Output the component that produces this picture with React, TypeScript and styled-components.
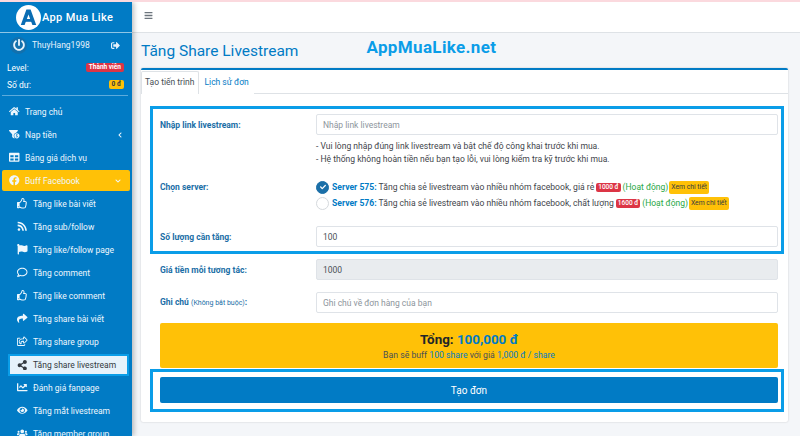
import React from "react";
import styled, { createGlobalStyle } from "styled-components";
import {
  FaHome,
  FaFunnelDollar,
  FaTable,
  FaFacebook,
  FaRegThumbsUp,
  FaRss,
  FaFlag,
  FaRegComment,
  FaShare,
  FaRegShareSquare,
  FaShareAlt,
  FaChartLine,
  FaEye,
  FaUsers,
  FaSignOutAlt,
  FaPowerOff,
  FaChevronLeft,
  FaChevronDown,
  FaBars,
  FaCheck,
} from "react-icons/fa";

const GlobalStyles = createGlobalStyle`
  html, body {
    margin: 0;
    padding: 0;
    height: 436px;
    overflow: hidden;
    background: #f4f6f9;
  }
  * { box-sizing: border-box; }
  body {
    font-family: Roboto, "Liberation Sans", sans-serif;
    font-size: 9px;
    color: #343a40;
  }
`;

const Page = styled.div`
  width: 800px;
  height: 436px;
  display: flex;
  overflow: hidden;
  border-top: 2px solid #fbd9de;
`;

const Sidebar = styled.aside`
  width: 132px;
  flex-shrink: 0;
  height: 434px;
  background: #017bc5;
  color: #fff;
  overflow: hidden;
  box-shadow: 2px 0 5px rgba(0, 0, 0, 0.25);
  z-index: 1;
`;

const Brand = styled.div`
  height: 31px;
  display: flex;
  align-items: center;
  padding-left: 16px;
  gap: 1px;
  border-bottom: 1px solid #8fc6e6;
  font-size: 11px;
  font-weight: 500;
  letter-spacing: 0.35px;
`;

const UserRow = styled.div`
  display: flex;
  align-items: center;
  padding: 0 12px 2px 10px;
  height: 26px;
  font-size: 8.5px;
  color: #e5f2fb;
  svg { flex-shrink: 0; }
`;

const UserName = styled.span`
  margin-left: 5px;
  flex: 1;
`;

const PowerBadge = styled.span`
  width: 17px;
  height: 17px;
  border-radius: 50%;
  background: #1270ad;
  display: flex;
  align-items: center;
  justify-content: center;
`;

const InfoRow = styled.div`
  display: flex;
  align-items: center;
  justify-content: space-between;
  height: 17px;
  padding: 0 8px 0 7px;
  font-size: 8.5px;
`;

const Pill = styled.span<{ $tone: "red" | "yellow" }>`
  background: ${(p) => (p.$tone === "red" ? "#dc3545" : "#ffc107")};
  color: ${(p) => (p.$tone === "red" ? "#fff" : "#343a40")};
  font-size: 6.5px;
  font-weight: 700;
  border-radius: 2px;
  padding: 1px 3px;
  line-height: 7px;
`;

const Divider = styled.div`
  height: 1px;
  margin: 2px 4px 4px 2px;
  background: #5cabdc;
`;

const NavList = styled.nav`
  display: flex;
  flex-direction: column;
`;

const NavItem = styled.div<{ $sub?: boolean; $open?: boolean; $current?: boolean }>`
  height: ${(p) => (p.$current ? "22px" : p.$open ? "21px" : "23px")};
  margin: ${(p) =>
    p.$open ? "1px 2px 1px" : p.$current ? "1px 3px 0 8px" : "0"};
  padding-left: ${(p) => (p.$current ? "7px" : p.$sub ? "17px" : p.$open ? "7px" : "9px")};
  padding-right: 9px;
  display: flex;
  align-items: center;
  font-size: 8.5px;
  color: ${(p) => (p.$current ? "#343a40" : "#eef7fd")};
  background: ${(p) => (p.$open ? "#ffc107" : p.$current ? "#e6f2fb" : "transparent")};
  border-radius: ${(p) => (p.$open ? "2px" : "0")};
  border: ${(p) => (p.$current ? "2px solid #0a9de8" : "none")};
`;

const NavIcon = styled.span`
  width: 16px;
  display: flex;
  align-items: center;
  flex-shrink: 0;
  font-size: 10.5px;
`;

const NavText = styled.span`
  flex: 1;
  white-space: nowrap;
`;

const Main = styled.div`
  flex: 1;
  min-width: 0;
  display: flex;
  flex-direction: column;
`;

const TopBar = styled.header`
  height: 31px;
  flex-shrink: 0;
  background: #fff;
  border-bottom: 1px solid #dee2e6;
  display: flex;
  align-items: center;
  padding: 0 0 3px 12px;
  color: #6c757d;
  font-size: 9px;
`;

const Content = styled.main`
  flex: 1;
  padding: 0 12px 0 9px;
`;

const TitleRow = styled.div`
  height: 35px;
  display: flex;
  align-items: center;
  gap: 68px;
`;

const Title = styled.h1`
  margin: 0;
  font-size: 15.5px;
  font-weight: 400;
  color: #017bc5;
  white-space: nowrap;
`;

const Watermark = styled.span`
  font-size: 17px;
  font-weight: 700;
  color: #0a9de8;
  letter-spacing: 0.35px;
  margin-top: -7px;
`;

const Card = styled.section`
  height: 354px;
  background: #fff;
  border-top: 2px solid #017bc5;
  border-radius: 2px;
  box-shadow: 0 0 2px rgba(0, 0, 0, 0.2);
`;

const Tabs = styled.div`
  display: flex;
  height: 24px;
  padding-top: 1px;
  border-bottom: 1px solid #dee2e6;
  font-size: 8.5px;
`;

const Tab = styled.div<{ $active?: boolean }>`
  height: 23px;
  padding: 0 4px 2px ${(p) => (p.$active ? "3px" : "4px")};
  display: flex;
  align-items: center;
  color: ${(p) => (p.$active ? "#495057" : "#017bc5")};
  background: #fff;
  border: 1px solid ${(p) => (p.$active ? "#dee2e6" : "transparent")};
  border-bottom: 0;
  border-radius: 2px 2px 0 0;
`;

const FormBody = styled.div`
  padding: 12px 4px 0 9px;
`;

const Highlight = styled.div`
  border: 3px solid #0a9de8;
`;

const FieldBlock = styled(Highlight)`
  padding: 5px 3px 0 7px;
  height: 148px;
`;

const Row = styled.div`
  display: grid;
  grid-template-columns: 156px 1fr;
  align-items: center;
  height: 21px;
`;

const QuantityRow = styled(Row)`
  margin-top: 16px;
`;

const PlainFields = styled.div`
  display: flex;
  flex-direction: column;
  gap: 12px;
  padding: 5px 6px 10px 10px;
`;

const Label = styled.label`
  font-size: 8.5px;
  line-height: 14px;
  font-weight: 700;
  color: #1a6ea6;
`;

const Hint = styled.small`
  font-size: 7px;
  font-weight: 400;
`;

const Input = styled.div<{ $disabled?: boolean; $value?: boolean }>`
  height: 21px;
  border: 1px solid #dfe3e8;
  border-radius: 2px;
  padding: 0 6px;
  display: flex;
  align-items: center;
  font-size: 8.5px;
  color: ${(p) => (p.$value ? "#495057" : "#8d959c")};
  background: ${(p) => (p.$disabled ? "#e9ecef" : "#fff")};
`;

const Notes = styled.div`
  margin: 5px 0 0 156px;
  font-size: 8.55px;
  line-height: 13px;
  color: #3f454b;
`;

const ServerRow = styled.div`
  display: grid;
  grid-template-columns: 156px 1fr;
  align-items: start;
  margin-top: 14px;
`;

const ServerList = styled.div`
  display: flex;
  flex-direction: column;
  gap: 2px;
`;

const ServerOption = styled.div`
  display: flex;
  align-items: center;
  height: 14px;
  font-size: 8.6px;
  white-space: nowrap;
  color: #3f454b;
`;

const Radio = styled.span<{ $checked?: boolean }>`
  width: 13px;
  height: 13px;
  border-radius: 50%;
  margin-right: 3px;
  flex-shrink: 0;
  display: flex;
  align-items: center;
  justify-content: center;
  color: #fff;
  font-size: 6px;
  background: ${(p) => (p.$checked ? "#1b6fa8" : "#fff")};
  border: 1px solid ${(p) => (p.$checked ? "#1b6fa8" : "#d5d9dd")};
`;

const ServerName = styled.b`
  color: #017bc5;
  margin-right: 2px;
`;

const Price = styled.span`
  background: #dc3545;
  color: #fff;
  font-size: 6.5px;
  font-weight: 500;
  padding: 1px 2px;
  line-height: 7px;
  border-radius: 2px;
  margin: 0 1px 0 2px;
`;

const Active = styled.span`
  color: #28a745;
  margin: 0 1px;
  font-size: 8.5px;
`;

const Detail = styled.span`
  background: #ffc107;
  color: #343a40;
  font-size: 6.8px;
  padding: 3px 2px;
  line-height: 7px;
  border-radius: 2px;
`;

const Total = styled.div`
  height: 45px;
  margin: 0 6px 0 10px;
  background: #ffc107;
  border-radius: 2px;
  display: flex;
  flex-direction: column;
  align-items: center;
  justify-content: center;
  gap: 3px;
  padding-top: 1px;
`;

const TotalAmount = styled.div`
  font-size: 13.4px;
  font-weight: 700;
  color: #212529;
`;

const Accent = styled.span`
  color: #017bc5;
`;

const TotalNote = styled.div`
  font-size: 8.7px;
  color: #495057;
`;

const SubmitBox = styled(Highlight)`
  height: 43px;
  margin-top: 1px;
  padding: 5px 3px 0 7px;
`;

const Submit = styled.button`
  width: 100%;
  height: 26px;
  background: #017bc5;
  color: #fff;
  border: 0;
  border-radius: 2px;
  font: 400 10px Roboto, "Liberation Sans", sans-serif;
`;

const Logo = () => (
  <svg width="25" height="25" viewBox="0 0 25 25">
    <circle cx="12.5" cy="12.5" r="12.5" fill="#fff" />
    <path d="M10.4 4.5 H14.6 L20.2 20 H16.4 L12.5 9.6 L8.6 20 H4.8 Z" fill="#0a6db3" />
    <rect x="9" y="14" width="7" height="2.8" fill="#0a6db3" />
  </svg>
);

const menu = [
  { icon: <FaHome />, text: "Trang chủ" },
  { icon: <FaFunnelDollar />, text: "Nạp tiền", arrow: <FaChevronLeft size={6} /> },
  { icon: <FaTable />, text: "Bảng giá dịch vụ" },
  { icon: <FaFacebook />, text: "Buff Facebook", arrow: <FaChevronDown size={6} />, open: true },
  { icon: <FaRegThumbsUp />, text: "Tăng like bài viết", sub: true },
  { icon: <FaRss />, text: "Tăng sub/follow", sub: true },
  { icon: <FaFlag />, text: "Tăng like/follow page", sub: true },
  { icon: <FaRegComment />, text: "Tăng comment", sub: true },
  { icon: <FaRegThumbsUp />, text: "Tăng like comment", sub: true },
  { icon: <FaShare />, text: "Tăng share bài viết", sub: true },
  { icon: <FaRegShareSquare />, text: "Tăng share group", sub: true },
  { icon: <FaShareAlt />, text: "Tăng share livestream", sub: true, current: true },
  { icon: <FaChartLine />, text: "Đánh giá fanpage", sub: true },
  { icon: <FaEye />, text: "Tăng mắt livestream", sub: true },
  { icon: <FaUsers />, text: "Tăng member group", sub: true },
];

const servers = [
  { id: "Server 575:", desc: "Tăng chia sẻ livestream vào nhiều nhóm facebook, giá rẻ", price: "1000 đ", checked: true },
  { id: "Server 576:", desc: "Tăng chia sẻ livestream vào nhiều nhóm facebook, chất lượng", price: "1600 đ" },
];

const App = () => {
  return (
    <Page>
      <GlobalStyles />
      <Sidebar>
        <Brand>
          <Logo />
          App Mua Like
        </Brand>
        <UserRow>
          <PowerBadge>
            <FaPowerOff size={12} />
          </PowerBadge>
          <UserName>ThuyHang1998</UserName>
          <FaSignOutAlt size={9} />
        </UserRow>
        <InfoRow>
          Level:
          <Pill $tone="red">Thành viên</Pill>
        </InfoRow>
        <InfoRow>
          Số dư:
          <Pill $tone="yellow">0 đ</Pill>
        </InfoRow>
        <Divider />
        <NavList>
          {menu.map((item) => (
            <NavItem key={item.text} $sub={item.sub} $open={item.open} $current={item.current}>
              <NavIcon>{item.icon}</NavIcon>
              <NavText>{item.text}</NavText>
              {item.arrow}
            </NavItem>
          ))}
        </NavList>
      </Sidebar>
      <Main>
        <TopBar>
          <FaBars />
        </TopBar>
        <Content>
          <TitleRow>
            <Title>Tăng Share Livestream</Title>
            <Watermark>AppMuaLike.net</Watermark>
          </TitleRow>
          <Card>
            <Tabs>
              <Tab $active>Tạo tiến trình</Tab>
              <Tab>Lịch sử đơn</Tab>
            </Tabs>
            <FormBody>
              <FieldBlock>
                <Row>
                  <Label>Nhập link livestream:</Label>
                  <Input>Nhập link livestream</Input>
                </Row>
                <Notes>
                  - Vui lòng nhập đúng link livestream và bật chế độ công khai trước khi mua.
                  <br />
                  - Hệ thống không hoàn tiền nếu bạn tạo lỗi, vui lòng kiểm tra kỹ trước khi mua.
                </Notes>
                <ServerRow>
                  <Label>Chọn server:</Label>
                  <ServerList>
                    {servers.map((s) => (
                      <ServerOption key={s.id}>
                        <Radio $checked={s.checked}>{s.checked && <FaCheck />}</Radio>
                        <ServerName>{s.id}</ServerName>
                        {s.desc}
                        <Price>{s.price}</Price>
                        <Active>(Hoạt động)</Active>
                        <Detail>Xem chi tiết</Detail>
                      </ServerOption>
                    ))}
                  </ServerList>
                </ServerRow>
                <QuantityRow>
                  <Label>Số lượng cần tăng:</Label>
                  <Input $value>100</Input>
                </QuantityRow>
              </FieldBlock>
              <PlainFields>
                <Row>
                  <Label>Giá tiền mỗi tương tác:</Label>
                  <Input $disabled $value>1000</Input>
                </Row>
                <Row>
                  <Label>
                    Ghi chú <Hint>(Không bắt buộc)</Hint>:
                  </Label>
                  <Input>Ghi chú về đơn hàng của bạn</Input>
                </Row>
              </PlainFields>
              <Total>
                <TotalAmount>
                  Tổng: <Accent>100,000 đ</Accent>
                </TotalAmount>
                <TotalNote>
                  Bạn sẽ buff <Accent>100 share</Accent> với giá <Accent>1,000 đ / share</Accent>
                </TotalNote>
              </Total>
              <SubmitBox>
                <Submit>Tạo đơn</Submit>
              </SubmitBox>
            </FormBody>
          </Card>
        </Content>
      </Main>
    </Page>
  );
};

export default App;
